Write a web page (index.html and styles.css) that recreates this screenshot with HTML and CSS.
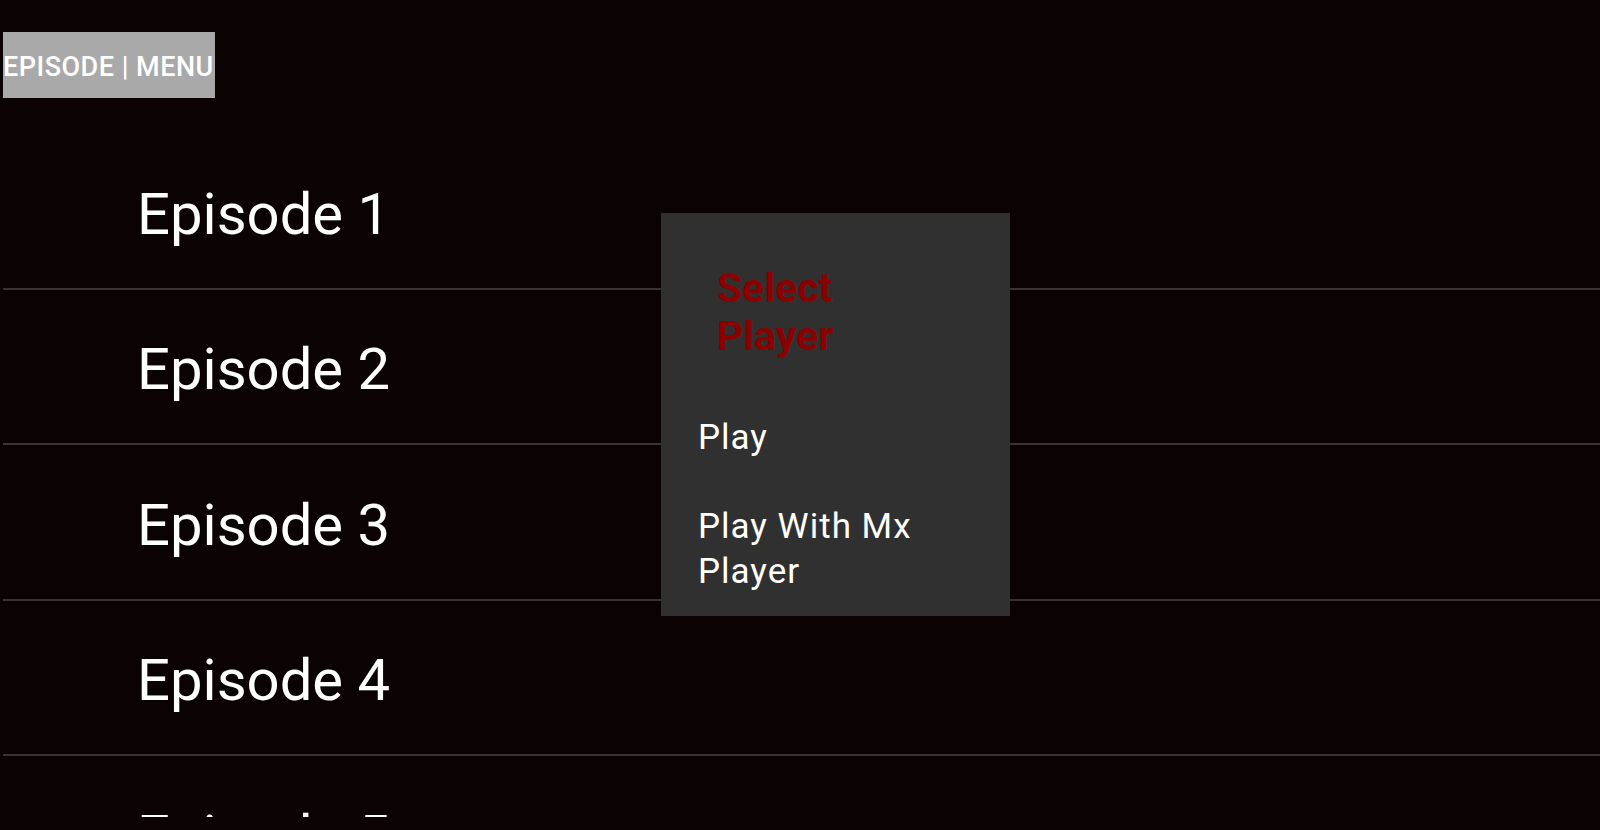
FILE: index.html
```html
<!DOCTYPE html>
<html lang="en">
<head>
	<meta charset="UTF-8">
	<title>Episodes</title>
	<link rel="stylesheet" href="styles.css">
</head>
<body>
<main class="screen">
	<header class="topbar">
		<span class="crumb">EPISODE | MENU</span>
	</header>

	<ul class="episodes">
		<li class="episode">Episode 1</li>
		<li class="episode">Episode 2</li>
		<li class="episode">Episode 3</li>
		<li class="episode">Episode 4</li>
		<li class="episode">Episode 5</li>
	</ul>

	<!-- player chooser popup -->
	<div class="dialog">
		<h2 class="dialog-title">Select Player</h2>
		<div class="dialog-item">Play</div>
		<div class="dialog-item">Play With Mx Player</div>
	</div>
</main>
</body>
</html>
```

FILE: styles.css
```css
html, body{
	margin: 0;
	padding: 0;
}
body{
	background: #0a0203;
	font-family: Roboto, "Noto Sans", sans-serif;
	color: #fff;
	width: 1600px;
	height: 830px;
	overflow: hidden;
}
.screen{
	position: relative;
	height: 830px;
}

.topbar{
	padding: 32px 0 0 3px;
	height: 66px;
}
.crumb{
	display: inline-block;
	box-sizing: border-box;
	background: #a9a9a9;
	color: #fff;
	font-size: 27px;
	font-weight: 500;
	letter-spacing: 0.5px;
	height: 66px;
	padding-top: 5px;
	line-height: 61px;
	width: 212px;
	white-space: nowrap;
}

.episodes{
	list-style: none;
	margin: 36px 0 0 3px;
	padding: 0;
	height: 683px;
	overflow: hidden;
}
.episode{
	box-sizing: border-box;
	height: 155.5px;
	display: flex;
	align-items: center;
	padding: 6px 0 0 134px;
	font-size: 58px;
	border-bottom: 2px solid #3a3334;
}

.dialog{
	position: absolute;
	left: 661px;
	top: 213px;
	width: 349px;
	box-sizing: border-box;
	background: #303030;
	padding: 51px 39px 0 37px;
}
.dialog-title{
	margin: 0 0 33px 19px;
	max-width: 200px;
	color: #8b0000;
	font-size: 41px;
	font-weight: bold;
	line-height: 48px;
}
.dialog-item{
	padding: 22px 0;
	font-size: 35px;
	letter-spacing: 1px;
	line-height: 45px;
}
```
